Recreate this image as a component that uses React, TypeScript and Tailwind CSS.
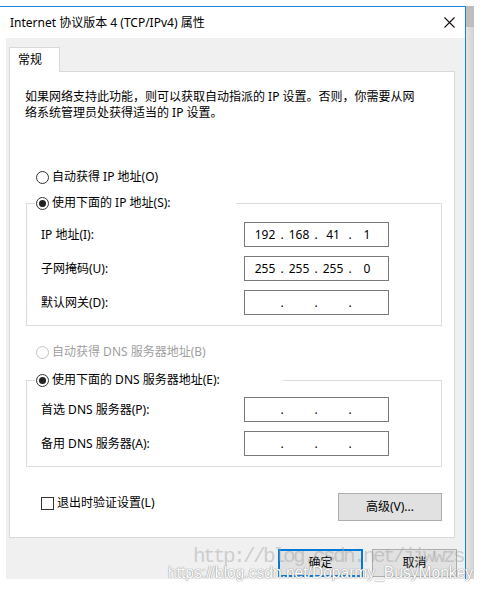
import { Fragment } from 'react';

const Radio = ({ checked, disabled }: { checked?: boolean; disabled?: boolean }) => (
  <span
    className={
      disabled
        ? 'flex h-[13px] w-[13px] shrink-0 items-center justify-center rounded-full border border-[#c4c4c4] bg-white'
        : 'flex h-[13px] w-[13px] shrink-0 items-center justify-center rounded-full border border-[#333333] bg-white'
    }
  >
    {checked && <span className="h-[7px] w-[7px] rounded-full bg-[#222222]" />}
  </span>
);

const IpField = ({ parts }: { parts: string[] }) => (
  <div className="flex h-[25px] w-[145px] items-center border border-[#7a7a7a] bg-white pl-[7px]">
    {parts.map((p, i) => (
      <Fragment key={i}>
        <span className="w-[26px] text-center">{p}</span>
        {i < 3 && <span className="w-[8px] text-center">.</span>}
      </Fragment>
    ))}
  </div>
);

const Row = ({ label, parts }: { label: string; parts: string[] }) => (
  <div className="flex h-[25px] items-center">
    <span className="ml-[14px] w-[203px]">{label}</span>
    <IpField parts={parts} />
  </div>
);

const empty = ['', '', '', ''];

export default function App() {
  return (
    <div className="relative h-[590px] w-[484px] overflow-hidden bg-white font-['Noto_Sans','Noto_Sans_CJK_SC',sans-serif] text-[12px] leading-[16px] text-black">
      <div className="mt-[6px] flex">
        {/* dialog window */}
        <div className="w-[466px] border-t border-r border-[#1883d7]">
          {/* title bar */}
          <div className="flex h-[31px] items-center justify-between bg-white pl-[10px] pr-[10px]">
            <span>Internet 协议版本 4 (TCP/IPv4) 属性</span>
            <svg width="11" height="11" viewBox="0 0 11 11">
              <path d="M0.5 0.5 L10.5 10.5 M10.5 0.5 L0.5 10.5" stroke="#111" strokeWidth="1.1" />
            </svg>
          </div>

          {/* body */}
          <div className="ml-[6px] bg-[#f0f0f0] pb-[2px] pl-[3px] pt-[9px]">
            <div className="relative z-10 -mb-[1px] flex h-[25px] w-[51px] items-center border-x border-t border-[#d9d9d9] bg-white pl-[8px]">
              常规
            </div>
            <div className="w-[446px] border border-[#d9d9d9] bg-white pb-[16px] pt-[17px]">
              <p className="pl-[15px]">
                如果网络支持此功能，则可以获取自动指派的 IP 设置。否则，你需要从网
                <br />
                络系统管理员处获得适当的 IP 设置。
              </p>

              <div className="ml-[26px] mt-[48px] flex items-center gap-[3px]">
                <Radio />
                <span>自动获得 IP 地址(O)</span>
              </div>

              <fieldset className="ml-[16px] mt-[10px] w-[416px] border border-[#dcdcdc] pb-[10px] pt-[11px]">
                <legend className="ml-[8px] w-[201px] pl-[1px]">
                  <div className="flex items-center gap-[3px]">
                    <Radio checked />
                    <span>使用下面的 IP 地址(S):</span>
                  </div>
                </legend>
                <div className="flex flex-col gap-[9px]">
                  <Row label="IP 地址(I):" parts={['192', '168', '41', '1']} />
                  <Row label="子网掩码(U):" parts={['255', '255', '255', '0']} />
                  <Row label="默认网关(D):" parts={empty} />
                </div>
              </fieldset>

              <div className="ml-[26px] mt-[18px] flex items-center gap-[3px] text-[#a0a0a0]">
                <Radio disabled />
                <span>自动获得 DNS 服务器地址(B)</span>
              </div>

              <fieldset className="ml-[16px] mt-[12px] w-[416px] border border-[#dcdcdc] pb-[10px] pt-[9px]">
                <legend className="ml-[8px] w-[248px] pl-[1px]">
                  <div className="flex items-center gap-[3px]">
                    <Radio checked />
                    <span>使用下面的 DNS 服务器地址(E):</span>
                  </div>
                </legend>
                <div className="flex flex-col gap-[9px]">
                  <Row label="首选 DNS 服务器(P):" parts={empty} />
                  <Row label="备用 DNS 服务器(A):" parts={empty} />
                </div>
              </fieldset>

              <div className="ml-[16px] mt-[26px] flex w-[416px] items-start justify-between">
                <div className="ml-[15px] mt-[2px] flex items-center gap-[3px]">
                  <span className="h-[13px] w-[13px] border border-[#333333] bg-white" />
                  <span>退出时验证设置(L)</span>
                </div>
                <button className="h-[28px] w-[104px] border border-[#adadad] bg-[#e1e1e1]">高级(V)...</button>
              </div>
            </div>

            <div className="mt-[11px] flex justify-end gap-[9px] pr-[8px]">
              <button className="h-[28px] w-[85px] border-2 border-[#0078d7] bg-[#e1e1e1]">确定</button>
              <button className="h-[28px] w-[85px] border border-[#adadad] bg-[#e1e1e1]">取消</button>
            </div>
          </div>
        </div>

        {/* shadow strip at the right */}
        <div className="flex w-[8px] flex-col">
          <div className="h-[21px] bg-[#bdbdbd]" />
          <div className="flex-1 bg-gradient-to-r from-[#e4e4e4] to-[#d2d2d2]" />
        </div>
      </div>

      {/* watermarks */}
      <span className="pointer-events-none absolute left-[193px] top-[545px] whitespace-nowrap font-['Liberation_Mono',monospace] text-[21px] leading-[24px] tracking-[-2.6px] text-[#a0a0a0]/45">
        http://blog.csdn.net/jiwwzs
      </span>
      <span className="pointer-events-none absolute left-[168px] top-[563px] whitespace-nowrap font-['Liberation_Sans',sans-serif] text-[15.6px] leading-[20px] text-white [text-shadow:0_0_1px_#8a8a8a,0_0_1px_#8a8a8a]">
        https://blog.csdn.net/Doparmy_BusyMonkey
      </span>
    </div>
  );
}
